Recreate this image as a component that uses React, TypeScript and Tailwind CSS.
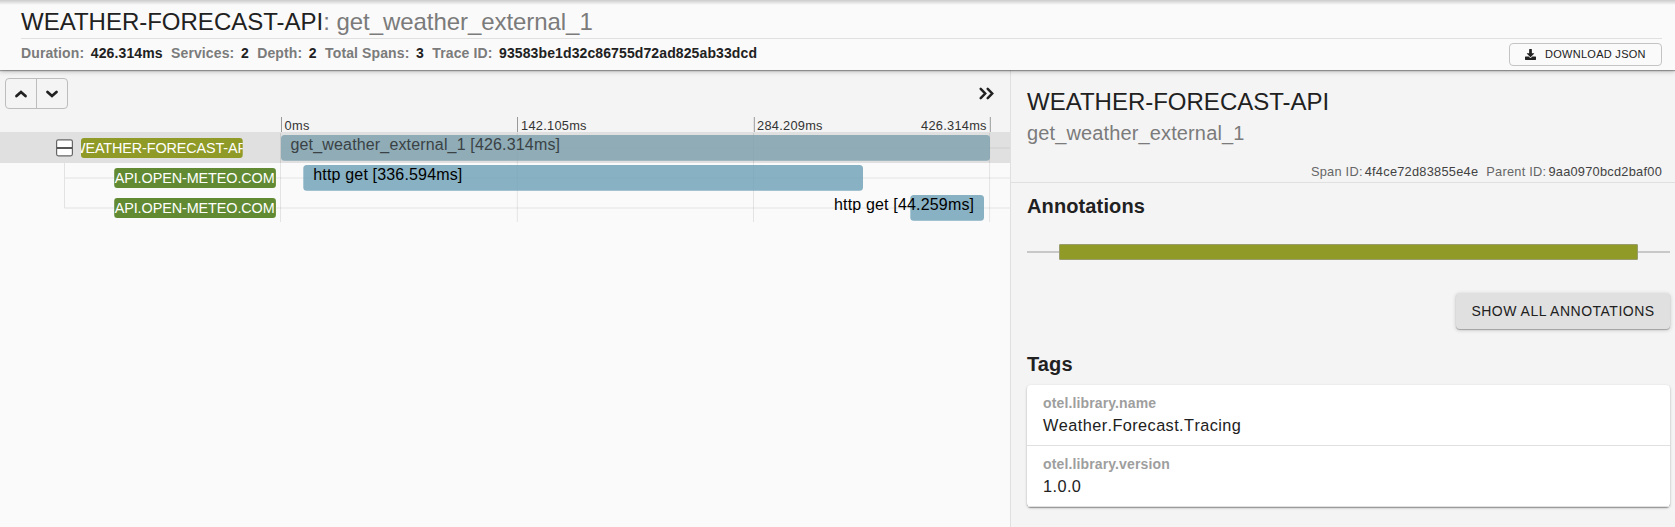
import React from "react";

const spans = [
  { y: 15, label: "WEATHER-FORECAST-API", color: "#8f9a27", lx: 81, bx: 281, bw: 709, text: "get_weather_external_1 [426.314ms]", tx: 290.5, tl: 269.5, ll: 179 },
  { y: 45, label: "API.OPEN-METEO.COM", color: "#618a33", lx: 114.2, bx: 303.3, bw: 559.7, text: "http get [336.594ms]", tx: 313.3, tl: 149, ll: 160 },
  { y: 75, label: "API.OPEN-METEO.COM", color: "#618a33", lx: 114.2, bx: 910.3, bw: 73.7, text: "http get [44.259ms]", tx: 834, tl: 140, ll: 160 },
];

const ticks = [
  { x: 281.5, label: "0ms", tx: 284.5, tl: 25 },
  { x: 517.5, label: "142.105ms", tx: 521, tl: 65.5 },
  { x: 754.3, label: "284.209ms", tx: 757, tl: 65.5 },
  { x: 990.3, label: "426.314ms", tx: 921, tl: 65.5 },
];

function Timeline() {
  return (
    <svg width="1010" height="110" viewBox="0 0 1010 110" className="block">
      <defs>
        {spans.map((s, i) => (
          <clipPath id={`label${i}`} key={i}>
            <rect x={s.lx} y={s.y + 6} width="161.7" height="20" rx="3" />
          </clipPath>
        ))}
      </defs>
      <rect x="0" y="15" width="1010" height="95" fill="#fafafa" />
      <rect x="0" y="15" width="1010" height="31" fill="#e0e0e0" />
      {ticks.map((t) => (
        <g key={t.label}>
          <line x1={t.x} x2={t.x} y1="0" y2="15" stroke="#999" />
          <text x={t.tx} y="13.3" fontSize="12.8" fill="#333" textLength={t.tl}>{t.label}</text>
        </g>
      ))}
      <path d="M64.5 46V91M64.5 91H114M64.5 61H114" stroke="#e2e2e2" fill="none" />
      <path d="M281 31H1010" stroke="#d5d5d5" strokeWidth="1.6" />
      <path d="M276 61H1010M276 91H1010" stroke="#ececec" strokeWidth="1.6" />
      <path d="M280.5 16V105M517.3 16V105M753.5 16V105M989.6 16V105" stroke="#000" strokeOpacity="0.09" />
      {spans.map((s, i) => (
        <g key={i}>
          <rect x={s.bx} y={s.y + 3} width={s.bw} height="25.7" rx="3.5" fill={i === 0 ? "#81a3b0" : "#75a4ba"} fillOpacity="0.86" />
          <rect x={s.lx} y={s.y + 6} width="161.7" height="20" rx="3" fill={s.color} />
          <text clipPath={`url(#label${i})`} x={s.lx + 80.5 - s.ll / 2} y={s.y + 20.8} fontSize="14.4" fill="#fff" textLength={s.ll}>{s.label}</text>
        </g>
      ))}
      {spans.map((s) => (
        <text key={s.y} x={s.tx} y={s.y + 17.9} fontSize="16" fill={s.y === 15 ? "#3a4245" : "#000"} textLength={s.tl}>{s.text}</text>
      ))}
      <rect x="56.6" y="22.8" width="15.8" height="16" rx="1.8" fill="#fff" stroke="#666" strokeWidth="1.2" />
      <path d="M57 31H72" stroke="#444" strokeWidth="1.8" />
    </svg>
  );
}

function Meta({ name, value }: { name: string; value: string }) {
  return (
    <div className="flex gap-[6.6px]">
      <span className="text-[#7b7b7b]">{name}:</span>
      <span className="text-[#212121]">{value}</span>
    </div>
  );
}

function Tag({ name, value }: { name: string; value: string }) {
  return (
    <div className="h-[61px] border-b border-[#e0e0e0] px-4 pt-[8px]">
      <div className="text-[14px] leading-[20px] font-bold tracking-[0.13px] text-[#9e9e9e]">{name}</div>
      <div className="text-[16.3px] leading-[24px] tracking-[0.42px] text-[#212121] [font-kerning:none]">{value}</div>
    </div>
  );
}

export default function App() {
  return (
    <div className="flex h-[527px] w-[1675px] flex-col overflow-hidden bg-[#fafafa] font-['Liberation_Sans',Arial,sans-serif] text-[#212121]">
      <header className="z-10 h-[70px] shrink-0 bg-[#fafafa] pr-[13px] pl-[21px] shadow-[0_1px_5px_rgba(0,0,0,0.3),0_1px_1px_rgba(0,0,0,0.3)]">
        <div className="-mr-[13px] -ml-[21px] h-[5px] bg-gradient-to-b from-[#cccccc] to-[#fafafa]" />
        <div className="flex h-[34px] items-center border-b border-[#e0e0e0] text-[24px] leading-[32px] whitespace-pre">
          <h1>WEATHER-FORECAST-API</h1>
          <span className="tracking-[-0.06px] text-[#7b7b7b]">: get_weather_external_1</span>
        </div>
        <div className="flex justify-between">
          <div className="flex gap-[8.4px] pt-[4px] text-[14px] leading-[20px] font-bold tracking-[0.11px]">
            <Meta name="Duration" value="426.314ms" />
            <Meta name="Services" value="2" />
            <Meta name="Depth" value="2" />
            <Meta name="Total Spans" value="3" />
            <Meta name="Trace ID" value="93583be1d32c86755d72ad825ab33dcd" />
          </div>
          <button className="mt-[4px] flex h-[23px] w-[153px] items-center rounded-[4px] border border-[#c4c4c4] pl-[15px] text-[11px] tracking-[0.28px] whitespace-nowrap">
            <svg width="11" height="11" viewBox="0 0 512 512" fill="#212121" className="mr-[9px] shrink-0">
              <path d="M216 0h80c13 0 24 11 24 24v168h88c18 0 27 21 14 34L270 378c-8 8-20 8-28 0L90 226c-13-13-4-34 14-34h88V24c0-13 11-24 24-24zm296 376v112c0 13-11 24-24 24H24c-13 0-24-11-24-24V376c0-13 11-24 24-24h146l49 49c20 20 53 20 74 0l49-49h146c13 0 24 11 24 24z" />
            </svg>
            DOWNLOAD JSON
          </button>
        </div>
      </header>
      <main className="flex min-h-0 flex-1">
        <section className="w-[1010px] shrink-0">
          <div className="flex h-[47px] items-start justify-between bg-[#f4f4f4] pt-[8px] pr-[15px] pl-[5px]">
            <div className="flex h-[31px] w-[63px] rounded-[4px] border border-[#bdbdbd]">
              <button className="flex w-[31px] items-center justify-center border-r border-[#bdbdbd]">
                <svg width="14" height="10" viewBox="0 0 14 10" fill="none" stroke="#212121" strokeWidth="2.8" strokeLinecap="round"><path d="M2.5 7L7 3L11.5 7" /></svg>
              </button>
              <button className="flex flex-1 items-center justify-center">
                <svg width="14" height="10" viewBox="0 0 14 10" fill="none" stroke="#212121" strokeWidth="2.8" strokeLinecap="round"><path d="M2.5 3L7 7L11.5 3" /></svg>
              </button>
            </div>
            <button className="mt-[8px]">
              <svg width="17" height="15" viewBox="0 0 17 15" fill="none" stroke="#212121" strokeWidth="2.5" strokeLinecap="round"><path d="M2.7 2.8L7.2 7.5L2.7 12.2M9.7 2.8L14.2 7.5L9.7 12.2" /></svg>
            </button>
          </div>
          <div className="bg-[#f4f4f4]"><Timeline /></div>
        </section>
        <aside className="min-w-0 flex-1 border-l border-[#e0e0e0] bg-[#f4f4f4]">
          <div className="h-[113px] border-b border-[#e0e0e0] pt-[16px] pr-[13px] pl-[16px]">
            <h2 className="text-[24px] leading-[32px]">WEATHER-FORECAST-API</h2>
            <div className="-mt-px text-[20px] leading-[32px] tracking-[0.13px] text-[#7b7b7b]">get_weather_external_1</div>
            <div className="mt-[14px] flex justify-end gap-[8px] text-[12.8px] leading-[18px] tracking-[0.25px]">
              <div><span className="mr-[2px] text-[#666]">Span ID:</span><span className="text-[#424242]">4f4ce72d83855e4e</span></div>
              <div><span className="mr-[2px] text-[#666]">Parent ID:</span><span className="text-[#424242]">9aa0970bcd2baf00</span></div>
            </div>
          </div>
          <div className="pr-[5px] pl-[16px]">
            <h3 className="pt-[7px] text-[20px] leading-[32px] font-bold tracking-[0.12px]">Annotations</h3>
            <div className="mt-[22px] flex h-[16px] items-center">
              <div className="h-[2px] w-[32px] bg-[#c8c8c8]" />
              <div className="h-[16px] flex-1 rounded-[1px] border border-[#999c6c] bg-[#8f9a27]" />
              <div className="h-[2px] w-[32px] bg-[#c8c8c8]" />
            </div>
            <div className="mt-[33px] flex justify-end">
              <button className="h-[36px] w-[214px] rounded-[4px] bg-[#e0e0e0] text-[14px] tracking-[0.5px] shadow-[0_1px_4px_rgba(0,0,0,0.2),0_1px_1px_rgba(0,0,0,0.25)]">SHOW ALL ANNOTATIONS</button>
            </div>
            <h3 className="mt-[19px] text-[20px] leading-[32px] font-bold tracking-[0.12px]">Tags</h3>
            <div className="mt-[5px] rounded-[4px] bg-white shadow-[0_1px_3px_rgba(0,0,0,0.2),0_1px_1px_rgba(0,0,0,0.3)]">
              <Tag name="otel.library.name" value="Weather.Forecast.Tracing" />
              <Tag name="otel.library.version" value="1.0.0" />
            </div>
          </div>
        </aside>
      </main>
    </div>
  );
}
